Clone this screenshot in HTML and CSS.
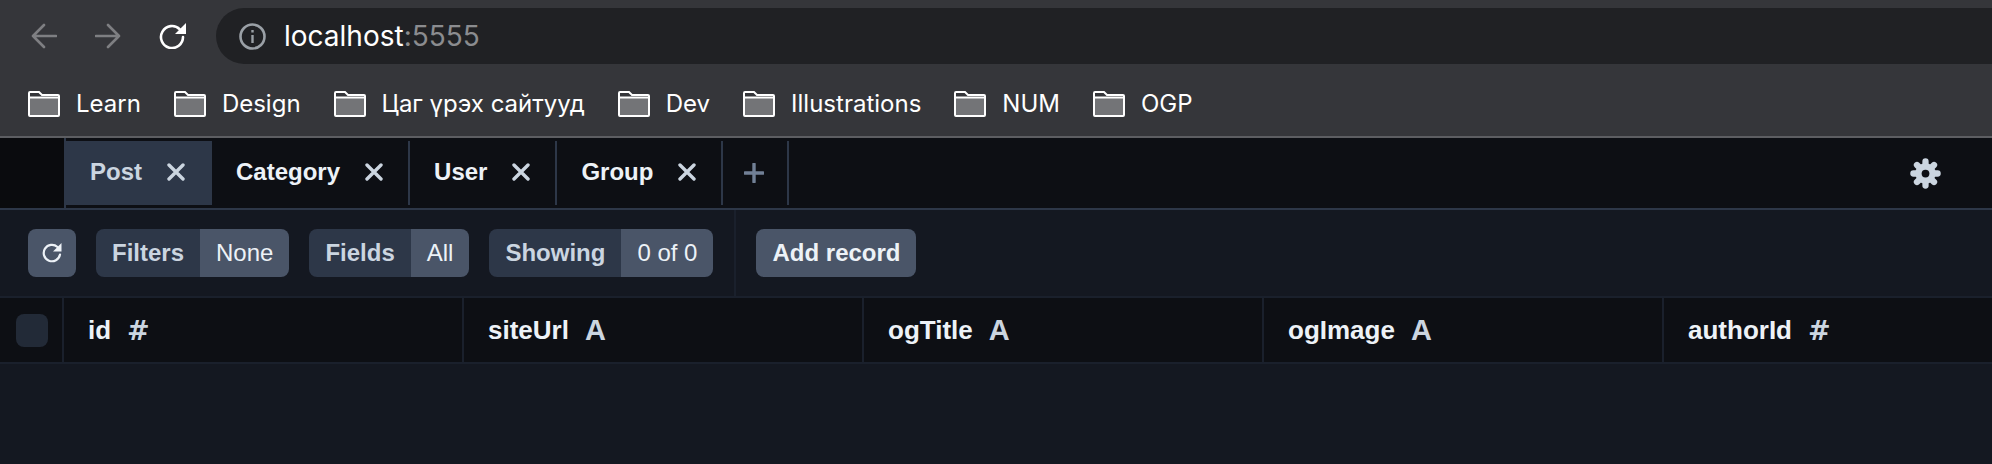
FILE: index.html
```html
<!DOCTYPE html>
<html>
<head>
    <meta charset="UTF-8">
    <title>Prisma Studio</title>
    <link rel="stylesheet" href="styles.css">
</head>
<body>
    <div class="browser">
        <div class="nav-row">
            <svg class="nav-icon" viewBox="0 0 26 26"><path d="M25 13H2M13 2 2 13l11 11" fill="none" stroke="#7e7f82" stroke-width="2.6" stroke-linecap="round" stroke-linejoin="round"/></svg>
            <svg class="nav-icon" viewBox="0 0 26 26"><path d="M1 13h23M13 2l11 11-11 11" fill="none" stroke="#7e7f82" stroke-width="2.6" stroke-linecap="round" stroke-linejoin="round"/></svg>
            <svg class="nav-icon reload" viewBox="0 0 27 26"><path d="M24 14A11 11 0 1 1 20.800 6.300" fill="none" stroke="#fff" stroke-width="2.6" stroke-linecap="round"/><path d="M27 0v11H16z" fill="#fff"/></svg>
            <div class="omnibox">
                <svg class="info" viewBox="0 0 27 27"><circle cx="13.5" cy="13.5" r="12" fill="none" stroke="#9aa0a6" stroke-width="2.6"/><path d="M12.3 12h2.400v8h-2.400zM12.3 7h2.400v2.500h-2.400z" fill="#9aa0a6"/></svg>
                <span class="url">localhost<span class="port">:5555</span></span>
            </div>
        </div>
        <div class="bookmarks">
            <div class="bookmark"><svg class="folder" viewBox="0 0 32 26"><use href="#folder"/></svg><span class="bookmark-name">Learn</span></div>
            <div class="bookmark"><svg class="folder" viewBox="0 0 32 26"><use href="#folder"/></svg><span class="bookmark-name">Design</span></div>
            <div class="bookmark"><svg class="folder" viewBox="0 0 32 26"><use href="#folder"/></svg><span class="bookmark-name">Цаг үрэх сайтууд</span></div>
            <div class="bookmark"><svg class="folder" viewBox="0 0 32 26"><use href="#folder"/></svg><span class="bookmark-name">Dev</span></div>
            <div class="bookmark"><svg class="folder" viewBox="0 0 32 26"><use href="#folder"/></svg><span class="bookmark-name">Illustrations</span></div>
            <div class="bookmark"><svg class="folder" viewBox="0 0 32 26"><use href="#folder"/></svg><span class="bookmark-name">NUM</span></div>
            <div class="bookmark"><svg class="folder" viewBox="0 0 32 26"><use href="#folder"/></svg><span class="bookmark-name">OGP</span></div>
        </div>
    </div>

    <svg class="defs" width="0" height="0">
        <symbol id="folder" viewBox="0 0 32 26">
            <path d="M1 6.500h30V24a1 1 0 0 1-1 1H2a1 1 0 0 1-1-1z" fill="#737477"/>
            <path d="M1 6.500V2a1 1 0 0 1 1-1h9l3 3h16a1 1 0 0 1 1 1v19a1 1 0 0 1-1 1H2a1 1 0 0 1-1-1V6.500h30" fill="none" stroke="#fff" stroke-width="2"/>
        </symbol>
        <symbol id="close" viewBox="0 0 18 18">
            <path d="M2 2l14 14M16 2 2 16" fill="none" stroke="currentColor" stroke-width="3.4" stroke-linecap="round"/>
        </symbol>
    </svg>

    <div class="tabs">
        <div class="tab-gutter"></div>
        <div class="tab active">Post<svg class="close" viewBox="0 0 18 18"><use href="#close"/></svg></div>
        <div class="tab">Category<svg class="close" viewBox="0 0 18 18"><use href="#close"/></svg></div>
        <div class="tab">User<svg class="close" viewBox="0 0 18 18"><use href="#close"/></svg></div>
        <div class="tab">Group<svg class="close" viewBox="0 0 18 18"><use href="#close"/></svg></div>
        <div class="tab add"><svg class="plus" viewBox="0 0 20 20"><path d="M10 1v18M1 10h18" fill="none" stroke="#718096" stroke-width="3.4" stroke-linecap="round"/></svg></div>
        <svg class="gear" viewBox="-16 -16 32 32">
            <g stroke="#cbd5e0" stroke-width="6.5" stroke-linecap="round">
                <path d="M0-12.500V12.500M-12.500 0H12.500M-8.800-8.800 8.800 8.800M8.800-8.800-8.800 8.800"/>
            </g>
            <circle r="10.500" fill="#cbd5e0"/>
            <circle r="4" fill="#0d0f14"/>
        </svg>
    </div>

    <div class="toolbar">
        <div class="toolbar-left">
            <div class="btn refresh"><svg class="refresh-icon" viewBox="0 0 22 22"><path d="M19 12.500A8.200 8.200 0 1 1 16.500 5" fill="none" stroke="#edf2f7" stroke-width="2.2" stroke-linecap="round"/><path d="M20.500 1v8.500H12z" fill="#edf2f7"/></svg></div>
            <div class="group"><span class="group-label">Filters</span><span class="group-value">None</span></div>
            <div class="group"><span class="group-label">Fields</span><span class="group-value">All</span></div>
            <div class="group"><span class="group-label">Showing</span><span class="group-value">0 of 0</span></div>
        </div>
        <div class="toolbar-right">
            <div class="btn add-record">Add record</div>
        </div>
    </div>

    <div class="table-head">
        <div class="check-cell"><div class="checkbox"></div></div>
        <div class="col">id<span class="type num">#</span></div>
        <div class="col">siteUrl<span class="type">A</span></div>
        <div class="col">ogTitle<span class="type">A</span></div>
        <div class="col">ogImage<span class="type">A</span></div>
        <div class="col">authorId<span class="type num">#</span></div>
    </div>
</body>
</html>
```

FILE: styles.css
```css
html, body {
    margin: 0;
    height: 100%;
    overflow: hidden;
}
body {
    background: #141821;
    font-family: "Liberation Sans", Arial, sans-serif;
    color: #edf2f7;
}
.defs {
    position: absolute;
}

/* browser chrome */
.browser {
    background: #35363a;
    border-bottom: 2px solid #5d5e62;
    font-family: Inter, Roboto, sans-serif;
    color: #fff;
}
.nav-row {
    display: flex;
    align-items: center;
    height: 56px;
    padding: 8px 0 8px 31px;
}
.nav-icon {
    width: 26px;
    height: 26px;
    margin-right: 38px;
}
.reload {
    width: 27px;
    margin-right: 30px;
}
.omnibox {
    flex: 1;
    display: flex;
    align-items: center;
    gap: 18px;
    height: 56px;
    padding-left: 23px;
    background: #202124;
    border-radius: 28px 0 0 28px;
}
.info {
    width: 27px;
    height: 27px;
}
.url {
    font-size: 28px;
}
.port {
    color: #8b8c8f;
}
.bookmarks {
    display: flex;
    align-items: center;
    gap: 33px;
    height: 64px;
    padding-left: 28px;
    font-size: 24px;
}
.bookmark {
    display: flex;
    align-items: center;
    gap: 16px;
}
.bookmark-name {
    margin-bottom: 2px;
}
.folder {
    width: 32px;
    height: 26px;
}

/* tabs */
.tabs {
    display: flex;
    align-items: stretch;
    height: 64px;
    padding: 3px 0;
    background: #0d0f14;
    border-bottom: 2px solid #2d3748;
    font-size: 24px;
    font-weight: 700;
}
.tab-gutter {
    width: 64px;
    margin: -3px 0;
    background: #0a0b0e;
    border-right: 2px solid #2d3748;
}
.tab {
    display: flex;
    align-items: center;
    gap: 25px;
    padding: 0 25px 2px 24px;
    border-right: 2px solid #2d3748;
    color: #edf2f7;
}
.tab.active {
    padding: 0 27px 2px 24px;
    background: #2d3748;
    color: #cbd5e0;
    border-right: 0;
}
.close {
    width: 18px;
    height: 18px;
    color: #cbd5e0;
}
.tab.add {
    padding: 0 23px 0 21px;
}
.plus {
    width: 20px;
    height: 20px;
}
.gear {
    width: 31px;
    height: 31px;
    margin: auto 51px auto auto;
}

/* toolbar */
.toolbar {
    display: flex;
    height: 86px;
    border-bottom: 2px solid #1a202c;
    font-size: 24px;
}
.toolbar-left {
    display: flex;
    align-items: center;
    gap: 20px;
    padding: 0 21px 0 28px;
    border-right: 2px solid #1a202c;
}
.toolbar-right {
    display: flex;
    align-items: center;
    padding-left: 20px;
}
.btn {
    display: flex;
    align-items: center;
    justify-content: center;
    height: 48px;
    background: #4a5568;
    border-radius: 8px;
    font-weight: 700;
}
.refresh {
    width: 48px;
}
.refresh-icon {
    width: 22px;
    height: 22px;
}
.add-record {
    padding: 0 16px;
}
.group {
    display: flex;
    height: 48px;
    border-radius: 8px;
    overflow: hidden;
    line-height: 48px;
}
.group-label {
    padding: 0 16px;
    background: #2d3748;
    color: #cbd5e0;
    font-weight: 700;
}
.group-value {
    padding: 0 16px;
    background: #4a5568;
    color: #edf2f7;
}

/* table header */
.table-head {
    display: flex;
    height: 64px;
    background: #0d0f14;
    border-bottom: 2px solid #1a202c;
    font-size: 26px;
    font-weight: 700;
}
.check-cell {
    display: flex;
    align-items: center;
    flex: none;
    width: 46px;
    padding-left: 16px;
    border-right: 2px solid #1a202c;
}
.checkbox {
    width: 32px;
    height: 33px;
    background: #222a37;
    border-radius: 8px;
}
.col {
    display: flex;
    align-items: center;
    flex: none;
    box-sizing: border-box;
    width: 400px;
    padding-left: 24px;
    border-right: 2px solid #1a202c;
}
.type {
    margin-left: 16px;
    color: #cbd5e0;
    font-size: 29px;
}
.type.num {
    font-family: "DejaVu Sans", sans-serif;
    font-size: 27px;
}
```
